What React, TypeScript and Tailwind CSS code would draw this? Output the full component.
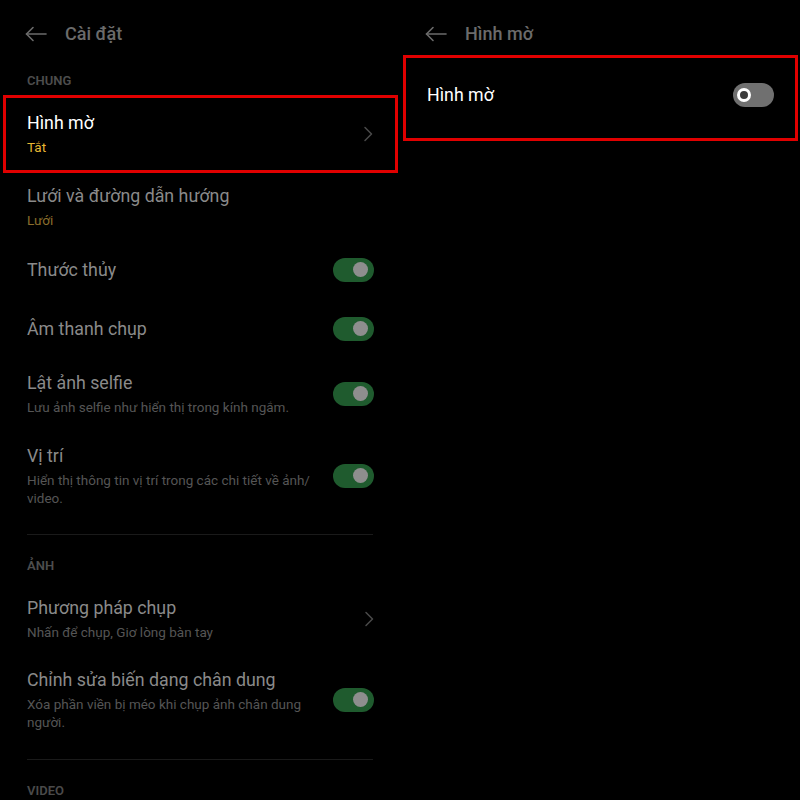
import React from "react";

const font = { fontFamily: "Roboto, 'Noto Sans', sans-serif" };

function BackArrow() {
  return (
    <svg width="22" height="16" viewBox="0 0 22 16" fill="none" stroke="#6b6b6b" strokeWidth="1.6" strokeLinecap="round" strokeLinejoin="round">
      <path d="M21 8H1.5" />
      <path d="M8 1.5L1.5 8L8 14.5" />
    </svg>
  );
}

function Chevron() {
  return (
    <svg width="10" height="16" viewBox="0 0 10 16" fill="none" stroke="#4a4a4a" strokeWidth="1.5" strokeLinecap="round" strokeLinejoin="round">
      <path d="M2 1.5L8.5 8L2 14.5" />
    </svg>
  );
}

function ToggleOn() {
  return (
    <div className="w-[41px] h-[24px] rounded-full bg-[#1f5b2e] flex items-center justify-end pr-[6px] shrink-0">
      <div className="w-[15px] h-[15px] rounded-full bg-[#8e8e8e]" />
    </div>
  );
}

function ToggleOff() {
  return (
    <div className="w-[41px] h-[24px] rounded-full bg-[#707070] flex items-center justify-start pl-[4px] shrink-0">
      <div className="w-[14px] h-[14px] rounded-full border-[3px] border-white bg-[#3c3c3c]" />
    </div>
  );
}

function Row({
  title,
  sub,
  subColor = "text-[#555555]",
  right,
  height,
}: {
  title: string;
  sub?: React.ReactNode;
  subColor?: string;
  right?: React.ReactNode;
  height: string;
}) {
  return (
    <div className={`flex items-center pl-[27px] pr-[26px] ${height}`}>
      <div className="flex-1 flex flex-col">
        <div className="text-[17.8px] leading-6 text-[#8a8a8a]">{title}</div>
        {sub && <div className={`mt-[3px] text-[13.5px] leading-[18px] ${subColor}`}>{sub}</div>}
      </div>
      {right}
    </div>
  );
}

export default function App() {
  return (
    <div className="w-[800px] h-[800px] bg-black flex overflow-hidden" style={font}>
      {/* Left panel */}
      <div className="w-[400px] flex flex-col">
        <div className="h-[68px] flex items-center pl-[25px]">
          <BackArrow />
          <span className="ml-[18px] text-[18px] font-medium text-[#6b6b6b] leading-6">Cài đặt</span>
        </div>
        <div className="h-[27px] flex items-center pl-[27px] text-[13px] font-semibold text-[#4d4d4d] leading-[18px]">CHUNG</div>
        <div className="ml-[3px] mr-[2px] h-[78px] border-[3px] border-[#e00000] flex items-center pl-[21px] pr-[22px]">
          <div className="flex-1 flex flex-col">
            <div className="text-[17.8px] leading-6 text-white">Hình mờ</div>
            <div className="mt-[3px] text-[13.5px] leading-[18px] text-[#e8b833]">Tắt</div>
          </div>
          <Chevron />
        </div>
        <Row height="h-[67px]" title="Lưới và đường dẫn hướng" sub="Lưới" subColor="text-[#8a6d2c]" />
        <Row height="h-[60px]" title="Thước thủy" right={<ToggleOn />} />
        <Row height="h-[58px]" title="Âm thanh chụp" right={<ToggleOn />} />
        <Row height="h-[73px]" title="Lật ảnh selfie" sub="Lưu ảnh selfie như hiển thị trong kính ngắm." right={<ToggleOn />} />
        <Row
          height="h-[91px]"
          title="Vị trí"
          sub={<>Hiển thị thông tin vị trí trong các chi tiết về ảnh/<br />video.</>}
          right={<ToggleOn />}
        />
        <div className="mt-[13px] mx-[27px] h-px bg-[#1a1a1a]" />
        <div className="pt-[22px] pl-[27px] text-[13px] font-semibold text-[#4d4d4d] leading-[18px]">ẢNH</div>
        <Row height="h-[87px]" title="Phương pháp chụp" sub="Nhấn để chụp, Giơ lòng bàn tay" right={<Chevron />} />
        <Row
          height="h-[75px]"
          title="Chỉnh sửa biến dạng chân dung"
          sub={<>Xóa phần viền bị méo khi chụp ảnh chân dung<br />người.</>}
          right={<ToggleOn />}
        />
        <div className="mt-[22px] mx-[27px] h-px bg-[#1a1a1a]" />
        <div className="pt-[22px] pl-[27px] text-[13px] font-semibold text-[#4a4a4a] leading-[18px]">VIDEO</div>
      </div>

      {/* Right panel */}
      <div className="w-[400px] flex flex-col">
        <div className="h-[55px] pt-[22px] pl-[25px]">
          <div className="h-6 flex items-center">
            <BackArrow />
            <span className="ml-[18px] text-[18px] font-medium text-[#6b6b6b] leading-6">Hình mờ</span>
          </div>
        </div>
        <div className="ml-[3px] mr-[2px] h-[86px] border-[3px] border-[#e00000] flex items-center pl-[21px] pr-[21px] pb-[6px]">
          <div className="flex-1 text-[17.8px] leading-6 text-white">Hình mờ</div>
          <ToggleOff />
        </div>
      </div>
    </div>
  );
}
